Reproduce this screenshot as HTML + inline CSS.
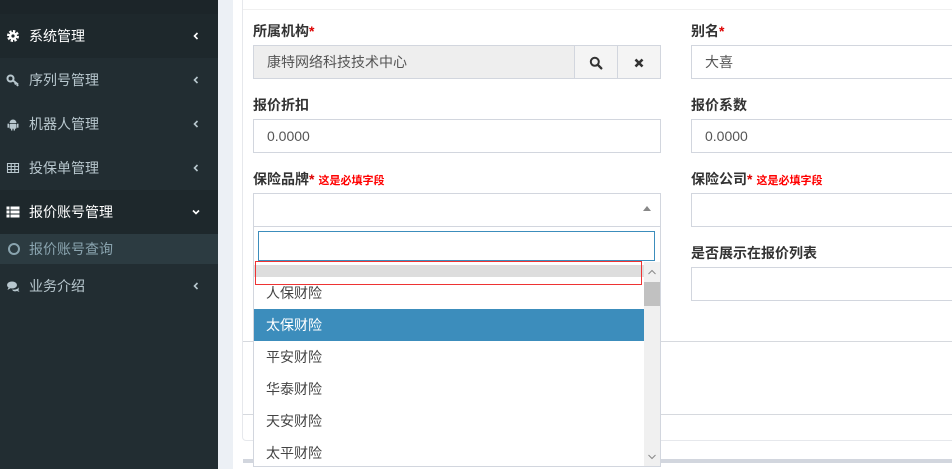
<!DOCTYPE html><html><head><meta charset="utf-8"><style>
*{box-sizing:border-box;margin:0;padding:0}
body{width:952px;height:469px;overflow:hidden;position:relative;background:#ecf0f5;font-family:"Liberation Sans","Noto Sans CJK SC",sans-serif;font-size:14px;color:#333}
.a{position:absolute}
.side{left:0;top:0;width:218px;height:469px;background:#222d32}
.mi{position:absolute;left:0;width:218px;height:44px;color:#b8c7ce;line-height:44px}
.mi svg.ic{position:absolute;left:6px;top:15px;width:14px;height:14px}
.mi .t{position:absolute;left:29px}
.mi svg.ch{position:absolute;left:192px;top:18px;width:8px;height:8px}
.lbl{position:absolute;font-weight:bold;font-size:14px;color:#333}
.lbl b{color:#d00;font-weight:bold}
.lbl i{color:#f00;font-style:normal;font-size:11px;margin-left:4px}
.inp{position:absolute;border:1px solid #d2d6de;background:#fff;height:34px;padding-left:13px;line-height:32px;color:#555}
.op{position:absolute;left:254px;width:390px;height:32px;line-height:32px;padding-left:12px;color:#444}
</style></head><body>
<div class="a side"></div>
<div class="a" style="left:0;top:0;width:218px;height:14px;background:#1c2529"></div>
<div class="mi" style="top:14px;background:#1e282c;color:#fff"><svg class="ic" viewBox="0 0 14 14"><circle cx="7" cy="7" r="4.5" fill="none" stroke="#fff" stroke-width="3" stroke-dasharray="2.2 1.3"/><circle cx="7" cy="7" r="4" fill="#fff"/><circle cx="7" cy="7" r="1.6" fill="#1e282c"/></svg><span class="t">系统管理</span><svg class="ch" viewBox="0 0 8 8"><path d="M5.5 1L2.5 4l3 3" fill="none" stroke="#fff" stroke-width="1.6"/></svg></div>
<div class="mi" style="top:58px"><svg class="ic" viewBox="0 0 14 14"><circle cx="4.5" cy="5.5" r="3" fill="none" stroke="#b8c7ce" stroke-width="2"/><path d="M7 7.5l5 4M10 9.5l-1 2M12 11.5l-1 1.5" stroke="#b8c7ce" stroke-width="2"/></svg><span class="t">序列号管理</span><svg class="ch" viewBox="0 0 8 8"><path d="M5.5 1L2.5 4l3 3" fill="none" stroke="#b8c7ce" stroke-width="1.6"/></svg></div>
<div class="mi" style="top:102px"><svg class="ic" viewBox="0 0 14 14"><path d="M3.5 6a3.5 3.5 0 0 1 7 0z" fill="#b8c7ce"/><rect x="3.5" y="6.7" width="7" height="5" rx="1" fill="#b8c7ce"/><rect x="1.5" y="6.7" width="1.5" height="4" fill="#b8c7ce"/><rect x="11" y="6.7" width="1.5" height="4" fill="#b8c7ce"/><rect x="5" y="11" width="1.4" height="2.5" fill="#b8c7ce"/><rect x="7.6" y="11" width="1.4" height="2.5" fill="#b8c7ce"/></svg><span class="t">机器人管理</span><svg class="ch" viewBox="0 0 8 8"><path d="M5.5 1L2.5 4l3 3" fill="none" stroke="#b8c7ce" stroke-width="1.6"/></svg></div>
<div class="mi" style="top:146px"><svg class="ic" viewBox="0 0 14 14"><path d="M1.5 2.5h11v9h-11zM1.5 5.5h11M1.5 8.5h11M5.2 2.5v9M8.8 2.5v9" fill="none" stroke="#b8c7ce" stroke-width="1.1"/></svg><span class="t">投保单管理</span><svg class="ch" viewBox="0 0 8 8"><path d="M5.5 1L2.5 4l3 3" fill="none" stroke="#b8c7ce" stroke-width="1.6"/></svg></div>
<div class="mi" style="top:190px;background:#1e282c;color:#fff"><svg class="ic" viewBox="0 0 14 14"><rect x="0.5" y="1.5" width="3" height="3" fill="#fff"/><rect x="4.5" y="1.5" width="9" height="3" fill="#fff"/><rect x="0.5" y="5.5" width="3" height="3" fill="#fff"/><rect x="4.5" y="5.5" width="9" height="3" fill="#fff"/><rect x="0.5" y="9.5" width="3" height="3" fill="#fff"/><rect x="4.5" y="9.5" width="9" height="3" fill="#fff"/></svg><span class="t">报价账号管理</span><svg class="ch" viewBox="0 0 8 8"><path d="M1 2.5l3 3 3-3" fill="none" stroke="#fff" stroke-width="1.6"/></svg></div>
<div class="a" style="left:0;top:234px;width:218px;height:30px;background:#2c3b41;color:#8aa4af;line-height:30px"><span style="position:absolute;left:8px;top:9px;width:12px;height:12px;border:2px solid #8aa4af;border-radius:50%"></span><span style="position:absolute;left:29px">报价账号查询</span></div>
<div class="mi" style="top:264px"><svg class="ic" viewBox="0 0 14 14"><ellipse cx="6" cy="6" rx="5" ry="3.5" fill="#b8c7ce"/><path d="M2.5 8.5L1.5 11l3-1.8z" fill="#b8c7ce"/><path d="M6 10.5c3 0.5 6.5-0.5 7-2.5l-0.5 3.5 1 1.5-2.5-1c-2 0.8-4 0.5-5-1.5z" fill="#b8c7ce"/></svg><span class="t">业务介绍</span><svg class="ch" viewBox="0 0 8 8"><path d="M5.5 1L2.5 4l3 3" fill="none" stroke="#b8c7ce" stroke-width="1.6"/></svg></div>

<div class="a" style="left:233px;top:0;width:719px;height:469px;background:#fff"></div>
<div class="a" style="left:242px;top:-5px;width:720px;height:446px;border:1px solid #e6e8ec;border-radius:4px"></div>
<div class="a" style="left:243px;top:9px;width:709px;height:1px;background:#f0f0f0"></div>
<div class="a" style="left:243px;top:341px;width:709px;height:1px;background:#d6d9de"></div>
<div class="a" style="left:243px;top:414px;width:709px;height:1px;background:#d6d9de"></div>
<div class="a" style="left:243px;top:459px;width:709px;height:4px;background:#d2d6de"></div>

<div class="lbl" style="left:253px;top:21px">所属机构<b>*</b></div>
<div class="inp" style="left:253px;top:45px;width:322px;background:#eee">康特网络科技技术中心</div>
<div class="inp" style="left:574px;top:45px;width:44px;background:#f4f4f4;padding:0"><svg style="position:absolute;left:14px;top:10px" width="14" height="14" viewBox="0 0 14 14"><circle cx="5.8" cy="5.8" r="4" fill="none" stroke="#333" stroke-width="2"/><path d="M8.8 8.8l3.5 3.5" stroke="#333" stroke-width="2.4" stroke-linecap="round"/></svg></div>
<div class="inp" style="left:617px;top:45px;width:44px;background:#f4f4f4;padding:0"><svg style="position:absolute;left:16px;top:12px" width="10" height="10" viewBox="0 0 10 10"><path d="M1.5 1.5l7 7M8.5 1.5l-7 7" stroke="#333" stroke-width="2.6"/></svg></div>
<div class="lbl" style="left:691px;top:21px">别名<b>*</b></div>
<div class="inp" style="left:691px;top:45px;width:270px">大喜</div>
<div class="lbl" style="left:253px;top:95px">报价折扣</div>
<div class="inp" style="left:253px;top:119px;width:408px">0.0000</div>
<div class="lbl" style="left:691px;top:95px">报价系数</div>
<div class="inp" style="left:691px;top:119px;width:270px">0.0000</div>
<div class="lbl" style="left:253px;top:169px">保险品牌<b>*</b><i>这是必填字段</i></div>
<div class="lbl" style="left:691px;top:169px">保险公司<b>*</b><i>这是必填字段</i></div>
<div class="inp" style="left:691px;top:193px;width:270px"></div>
<div class="lbl" style="left:691px;top:243px">是否展示在报价列表</div>
<div class="inp" style="left:691px;top:267px;width:270px"></div>

<div class="a" style="left:253px;top:193px;width:408px;height:274px;border:1px solid #d2d6de;background:#fff"></div>
<div class="a" style="left:254px;top:226px;width:406px;height:1px;background:#d2d6de"></div>
<div class="a" style="left:643px;top:206px;width:0;height:0;border-left:4px solid transparent;border-right:4px solid transparent;border-bottom:5px solid #888"></div>
<div class="a" style="left:258px;top:231px;width:397px;height:30px;border:1px solid #3c8dbc"></div>
<div class="a" style="left:254px;top:265px;width:390px;height:12px;background:#ddd"></div>
<div class="a" style="left:255px;top:261px;width:387px;height:24px;border:1px solid #e33"></div>
<div class="a" style="left:644px;top:262px;width:16px;height:204px;background:#f0f0f0"></div>
<div class="a" style="left:644px;top:282px;width:16px;height:24px;background:#c1c1c1"></div>
<svg class="a" style="left:648px;top:269px" width="8" height="6" viewBox="0 0 8 6"><path d="M0.5 5L4 1.5 7.5 5" fill="none" stroke="#888" stroke-width="1"/></svg>
<svg class="a" style="left:648px;top:454px" width="8" height="6" viewBox="0 0 8 6"><path d="M0.5 1L4 4.5 7.5 1" fill="none" stroke="#888" stroke-width="1"/></svg>
<div class="op" style="top:277px">人保财险</div>
<div class="op" style="top:309px;background:#3c8dbc;color:#fff">太保财险</div>
<div class="op" style="top:341px">平安财险</div>
<div class="op" style="top:373px">华泰财险</div>
<div class="op" style="top:405px">天安财险</div>
<div class="op" style="top:437px">太平财险</div>
</body></html>
